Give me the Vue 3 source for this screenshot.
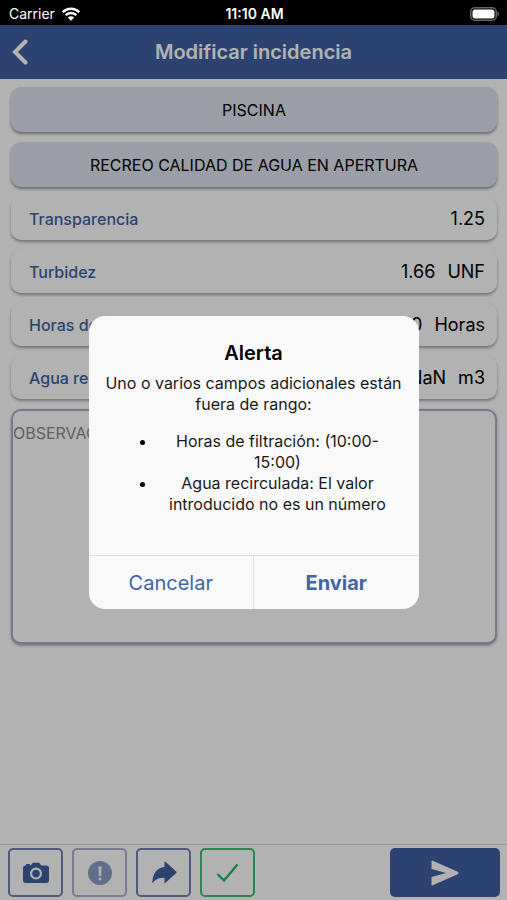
<template>
  <div class="screen">
    <div class="status">
      <div class="carrier">
        <span>Carrier</span>
        <svg class="wifi" viewBox="0 0 18 14" aria-hidden="true">
          <path d="M.8 5.200a11.600 11.600 0 0 1 16.400 0M3.600 8.200a7.600 7.600 0 0 1 10.800 0" />
          <path class="solid" d="M5.800 10.500a4.500 4.500 0 0 1 6.400 0L9 13.800z" />
        </svg>
      </div>
      <time class="clock">11:10 AM</time>
      <svg class="battery" viewBox="0 0 30 14" aria-hidden="true">
        <rect class="case" x="0.75" y="0.75" width="25.5" height="12.5" rx="4" />
        <rect class="charge" x="2.5" y="2.5" width="22" height="9" rx="2.5" />
        <path class="tip" d="M27.5 4.8c2.2.6 2.2 3.8 0 4.4z" />
      </svg>
    </div>

    <div class="page">
      <header class="bar">
        <button class="back" type="button" aria-label="Volver">
          <svg viewBox="0 0 16 26" aria-hidden="true"><path d="M13.500 2.500 3 13l10.500 10.500" /></svg>
        </button>
        <h1 class="bar-title">Modificar incidencia</h1>
      </header>

      <main class="content">
        <button v-for="c in categories" :key="c" class="category" type="button">{{ c }}</button>

        <div v-for="f in fields" :key="f.id" class="field">
          <label class="field-label" :for="f.id">{{ f.label }}</label>
          <input :id="f.id" v-model="f.value" class="field-input" type="text" />
          <span v-if="f.unit" class="field-unit">{{ f.unit }}</span>
        </div>

        <textarea v-model="notes" class="notes" placeholder="OBSERVACIONES" aria-label="Observaciones"></textarea>
      </main>

      <footer class="tools">
        <button class="tool" type="button" aria-label="Cámara">
          <svg class="icon" viewBox="0 0 28 28" aria-hidden="true">
            <path fill-rule="evenodd" d="M3.500 6.500h.5V5h4v1.500h.7l1.600-2.200q.5-.6 1.200-.6h5q.7 0 1.200.6l1.600 2.200H24.500a2.500 2.500 0 0 1 2.500 2.500v12.500a2.500 2.500 0 0 1-2.500 2.500h-21A2.500 2.500 0 0 1 1 21.500V9a2.500 2.500 0 0 1 2.500-2.500zM14 8.600a6 6 0 1 0 0 12 6 6 0 0 0 0-12zm0 2.200a3.800 3.800 0 1 1 0 7.600 3.800 3.800 0 0 1 0-7.600z" />
          </svg>
        </button>
        <button class="tool" type="button" aria-label="Incidencia" disabled>
          <svg class="icon" viewBox="0 0 28 28" aria-hidden="true">
            <path fill-rule="evenodd" d="M14 2a12 12 0 1 0 0 24 12 12 0 0 0 0-24zm-1.600 5.500h3.200l-.5 9.500h-2.200zM14 18.400a1.500 1.500 0 1 1 0 3 1.500 1.500 0 0 1 0-3z" />
          </svg>
        </button>
        <button class="tool" type="button" aria-label="Compartir">
          <svg class="icon" viewBox="0 0 28 28" aria-hidden="true">
            <path d="M14.500 3q0-1 1-.2L26.200 12.500q.8.800 0 1.600L15.500 23.800q-1 .8-1-.2v-4.800c-5.500 0-8.500 1.200-11.400 4.800q-.9.900-.8-.4C2.900 14.500 6.500 9 14.500 8z" />
          </svg>
        </button>
        <button class="tool ok" type="button" aria-label="Validar">
          <svg class="icon line" viewBox="0 0 28 28" aria-hidden="true"><path d="m3.500 15 6.500 6.500L23.500 5.500" /></svg>
        </button>
        <button class="send" type="button" aria-label="Enviar incidencia">
          <svg class="icon-send" viewBox="0 0 28 26" aria-hidden="true">
            <path d="M.5 1.500q0-1.200 1.200-.8l25 11q1.600 1.300 0 2.600l-25 11q-1.200.4-1.200-.8v-7.500l14.500-4L.5 9z" />
          </svg>
        </button>
      </footer>

      <div v-if="open" class="backdrop">
        <div class="alert" role="alertdialog" aria-modal="true" aria-labelledby="alert-title">
          <h2 id="alert-title" class="alert-title">Alerta</h2>
          <div class="alert-body">
            Uno o varios campos adicionales están fuera de rango:
            <ul class="alert-list">
              <li v-for="e in errors" :key="e">{{ e }}</li>
            </ul>
          </div>
          <div class="alert-actions">
            <button class="alert-btn" type="button" @click="open = false">Cancelar</button>
            <button class="alert-btn strong" type="button" @click="open = false">Enviar</button>
          </div>
        </div>
      </div>
    </div>
  </div>
</template>

<script setup>
import { ref } from 'vue'

const open = ref(true)
const notes = ref('')

const categories = ['PISCINA', 'RECREO CALIDAD DE AGUA EN APERTURA']

const fields = ref([
  { id: 'transparencia', label: 'Transparencia', value: '1.25', unit: '' },
  { id: 'turbidez', label: 'Turbidez', value: '1.66', unit: 'UNF' },
  { id: 'horas', label: 'Horas de filtración', value: '0', unit: 'Horas' },
  { id: 'agua', label: 'Agua recirculada', value: 'NaN', unit: 'm3' }
])

const errors = [
  'Horas de filtración: (10:00-15:00)',
  'Agua recirculada: El valor introducido no es un número'
]
</script>

<style>
body { margin: 0; background: #fff; }
</style>

<style scoped>
.screen {
  min-height: 100vh; display: flex; flex-direction: column;
  font-family: Inter, "Liberation Sans", sans-serif; color: #000;
}
.screen * { box-sizing: border-box; }
button, input, textarea { font: inherit; color: inherit; margin: 0; }
button { cursor: pointer; padding: 0; }

.status {
  height: 25px; padding: 2px 7px 0 9px;
  display: grid; grid-template-columns: 1fr auto 1fr; align-items: center;
  background: #000; color: #fff; font-size: 14px;
}
.carrier { display: flex; align-items: center; gap: 7px; }
.wifi { width: 18px; height: 14px; fill: none; stroke: #fff; stroke-width: 2.4; }
.wifi .solid { fill: #fff; stroke: none; }
.clock { font-weight: 600; }
.battery { width: 30px; height: 14px; justify-self: end; }
.case { fill: none; stroke: #666; stroke-width: 1.5; }
.charge { fill: #fff; }
.tip { fill: #666; }

.page { position: relative; flex: 1; display: flex; flex-direction: column; }
.bar {
  height: 54px; padding: 0 12px;
  display: grid; grid-template-columns: 1fr auto 1fr; align-items: center;
  background: #3f61a4; color: #fff;
}
.back { width: 16px; height: 26px; border: none; background: none; }
.back svg { display: block; width: 16px; height: 26px; fill: none; stroke: #fff; stroke-width: 4; stroke-linecap: round; }
.bar-title { margin: 0; font-size: 20px; font-weight: 600; }

.content { flex: 1; display: flex; flex-direction: column; gap: 10px; padding: 8px 10px 8px 11px; }
.category {
  height: 45px; border: none; border-radius: 10px;
  background: #dfe3ee; font-size: 16px;
  box-shadow: 0 2px 3px rgba(0, 0, 0, .4);
}
.field {
  height: 43px; padding: 0 12px 0 18px; border-radius: 10px;
  display: flex; align-items: center; background: #fff;
  box-shadow: 0 2px 3px rgba(0, 0, 0, .35);
}
.field-label { flex: none; font-size: 16px; font-weight: 500; color: #3f61a4; }
.field-input {
  flex: 1; min-width: 0; padding: 0; border: none; outline: none;
  background: none; text-align: right; font-size: 18px;
}
.field-unit { margin-left: 12px; font-size: 18px; }
.notes {
  height: 236px; padding: 12px 0; resize: none; outline: none;
  border: 2px solid #a9aecb; border-bottom-width: 3px; border-radius: 10px;
  background: #fff; font-size: 16px; line-height: 20px;
  box-shadow: 0 1px 3px rgba(0, 0, 0, .3);
}
.notes::placeholder { color: #8c8c8c; opacity: 1; }

.tools {
  display: flex; gap: 9px; padding: 3px 7px 3px 8px;
  border-top: 1px solid #dcdcdc; background: #fff;
}
.tool {
  width: 55px; height: 49px; border: 2px solid #7480b4; border-radius: 5px;
  display: flex; align-items: center; justify-content: center;
  background: #fff; color: #3f61a4;
}
.tool:disabled { opacity: .6; }
.tool.ok { border-color: #42bd76; color: #20bb60; }
.icon { width: 28px; height: 28px; fill: currentColor; }
.icon.line { fill: none; stroke: currentColor; stroke-width: 2.4; }
.send {
  width: 110px; height: 49px; margin-left: auto; border: none; border-radius: 5px;
  display: flex; align-items: center; justify-content: center;
  background: #3f61a4; color: #fff;
}
.icon-send { width: 28px; height: 26px; fill: currentColor; }

.backdrop {
  position: absolute; inset: 0; z-index: 10;
  display: flex; align-items: center; justify-content: center;
  background: rgba(0, 0, 0, .3);
}
.alert {
  width: 100%; max-width: 330px; border-radius: 16px; overflow: hidden;
  background: #f9f9f9;
}
.alert-title {
  margin: 0; padding-top: 24px; text-align: center;
  font-size: 20px; font-weight: 600; line-height: 26px;
}
.alert-body {
  padding: 7px 16px 24px; text-align: center;
  font-size: 16px; line-height: 21px; color: #1a1a1a;
}
.alert-list { margin: 16px 4px 0; padding: 0 0 16px 48px; }
.alert-list li::marker { color: #000; }
.alert-actions { display: flex; border-top: 1px solid #e0e0e0; }
.alert-btn {
  flex: 1; height: 53px; border: none; background: none;
  font-size: 20px; color: #4265a8;
}
.alert-btn + .alert-btn { border-left: 1px solid #e0e0e0; }
.alert-btn.strong { font-weight: 700; }
</style>
